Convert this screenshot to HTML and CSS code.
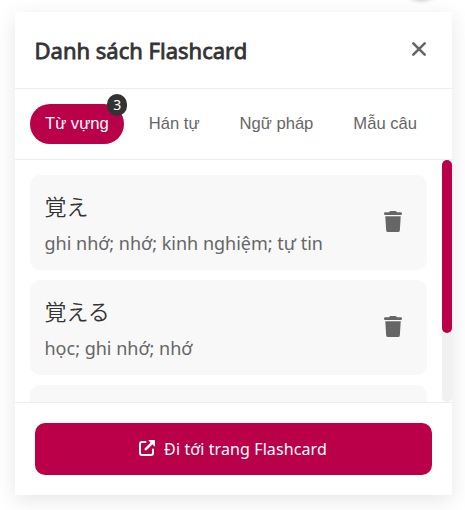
FILE: index.html
```html
<!DOCTYPE html>
<html lang="vi">
<head>
<meta charset="utf-8">
<title>Flashcard</title>
<link rel="stylesheet" href="styles.css">
</head>
<body>
<span class="floating"></span>
<main class="panel">
  <header class="header">
    <h1 class="title">Danh sách Flashcard</h1>
    <button class="close" aria-label="Đóng"><svg width="16" height="16" viewBox="0 0 16 16"><path d="M2.300 2.300l11.400 11.400M13.700 2.300L2.300 13.700" fill="none" stroke="currentColor" stroke-width="2.600" stroke-linecap="round"/></svg></button>
  </header>
  <nav class="tabs">
    <button class="tab active">Từ vựng<span class="badge">3</span></button>
    <button class="tab">Hán tự</button>
    <button class="tab">Ngữ pháp</button>
    <button class="tab">Mẫu câu</button>
  </nav>
  <section class="body">
    <div class="list">
      <article class="card">
        <div><div class="word" lang="ja">覚え</div><div class="mean">ghi nhớ; nhớ; kinh nghiệm; tự tin</div></div>
        <svg class="trash" viewBox="0 0 448 512" preserveAspectRatio="none"><path d="M135 18L128 32H32a32 32 0 0 0 0 64h384a32 32 0 0 0 0-64h-96l-7-14A32 32 0 0 0 284 0H164a32 32 0 0 0-29 18zM416 128H32l21 339a48 48 0 0 0 48 45h246a48 48 0 0 0 48-45z"/></svg>
      </article>
      <article class="card">
        <div><div class="word" lang="ja">覚える</div><div class="mean">học; ghi nhớ; nhớ</div></div>
        <svg class="trash" viewBox="0 0 448 512" preserveAspectRatio="none"><path d="M135 18L128 32H32a32 32 0 0 0 0 64h384a32 32 0 0 0 0-64h-96l-7-14A32 32 0 0 0 284 0H164a32 32 0 0 0-29 18zM416 128H32l21 339a48 48 0 0 0 48 45h246a48 48 0 0 0 48-45z"/></svg>
      </article>
      <article class="card"></article>
    </div>
    <div class="track"><div class="thumb"></div></div>
  </section>
  <footer class="footer">
    <button class="go"><svg width="16" height="16" viewBox="0 0 16 16"><path d="M6.500 2H3Q1 2 1 4v9q0 2 2 2h9q2 0 2-2V9.500" fill="none" stroke="currentColor" stroke-width="2" stroke-linecap="round"/><path d="M6.800 9.200L12.500 3.500" stroke="currentColor" stroke-width="2.600" stroke-linecap="round"/><path d="M10 0h5.300q.7 0 .7.700V6q0 .9-.7.300L9.700.8Q9.300 0 10 0z" fill="currentColor"/></svg><span>Đi tới trang Flashcard</span></button>
  </footer>
</main>
</body>
</html>
```
FILE: styles.css
```css
* { box-sizing: border-box; }
body {
  margin: 0;
  height: 510px;
  padding: 12px 13px 15px 15px;
  overflow: hidden;
  background: #fff;
  color: #333;
  font-family: "Noto Sans", "Noto Sans CJK JP", sans-serif;
}
button { border: 0; background: none; padding: 0; font: inherit; color: inherit; }
svg { display: block; flex: none; }
.floating {
  position: absolute;
  top: -44px;
  left: 399px;
  width: 44px;
  height: 44px;
  border-radius: 50%;
  box-shadow: 0 1px 4px rgba(0, 0, 0, .22);
}
.panel {
  position: relative;
  height: 483px;
  display: flex;
  flex-direction: column;
  background: #fff;
  box-shadow: 0 5px 20px rgba(0, 0, 0, .1);
}
.header {
  height: 77px;
  padding: 0 25px 0 19.5px;
  display: flex;
  align-items: center;
  justify-content: space-between;
  border-bottom: 1px solid #eee;
}
.title {
  margin: 0;
  font-size: 22px;
  line-height: 30px;
  font-weight: 400;
  -webkit-text-stroke: .8px currentColor;
}
.close { color: #666; padding-bottom: 3px; }
.tabs {
  height: 71px;
  padding: 15px;
  display: flex;
  gap: 10px;
  border-bottom: 1px solid #eee;
}
.tab {
  position: relative;
  height: 40px;
  padding: 0 15px;
  border-radius: 20px;
  color: #666;
  font: 16.6px "Liberation Sans", Arial, sans-serif;
  white-space: nowrap;
}
.tab.active { background: #b90048; color: #fff; }
.badge {
  position: absolute;
  top: -10px;
  right: -3.5px;
  width: 20px;
  height: 22px;
  border-radius: 11px;
  background: #333;
  color: #fff;
  font: 14px/22px "Noto Sans", sans-serif;
  text-align: center;
}
.body { height: 242px; display: flex; overflow: hidden; }
.list { flex: 1; padding: 15px; display: flex; flex-direction: column; gap: 10px; }
.card {
  flex: none;
  height: 95px;
  padding: 14px 25px 12px 14.5px;
  display: flex;
  align-items: center;
  justify-content: space-between;
  background: #f8f8f8;
  border-radius: 10px;
}
.word { font: 350 22px/33px "Noto Sans CJK JP", sans-serif; }
.mean { margin-top: 7px; font-size: 18px; line-height: 29px; color: #666; }
.trash { width: 18px; height: 21px; margin-bottom: 5px; fill: #666; }
.track { width: 10px; background: #f1f1f1; border-radius: 5px; }
.thumb { height: 173px; background: #b90048; border-radius: 5px; }
.footer { height: 93px; padding: 20px; border-top: 1px solid #eee; }
.go {
  width: 100%;
  height: 52px;
  display: flex;
  align-items: center;
  justify-content: center;
  gap: 9px;
  border-radius: 10px;
  background: #b90048;
  color: #fff;
  font-size: 16px;
  letter-spacing: .1px;
}
.go svg { margin: 0 0 2px -1px; }
```
